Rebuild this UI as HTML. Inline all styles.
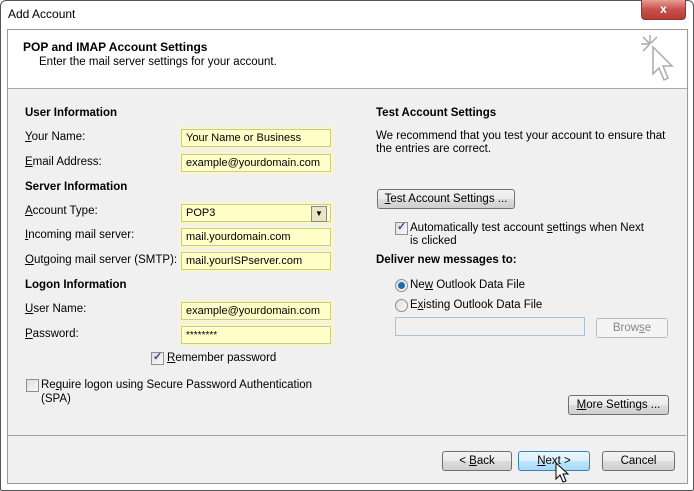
<!DOCTYPE html><html><head><style>
body{margin:0;width:694px;height:491px;overflow:hidden;background:#fff;font-family:"Liberation Sans",sans-serif;font-size:11.5px;color:#000}
.a{position:absolute;white-space:nowrap}
.win{position:absolute;left:0;top:0;width:692px;height:489px;border:1px solid #555;border-radius:6px 6px 2px 2px;background:#fff}
.frame{position:absolute;left:7px;top:29px;width:679px;height:453px;border:1px solid #999;background:#f0f0f0}
.hdr{position:absolute;left:0;top:0;width:679px;height:58px;background:#fff;border-bottom:1px solid #aaa}
.b{font-weight:bold}
.f{position:absolute;width:144px;height:16px;background:#ffffc8;border:1px solid #c8c89a;box-shadow:0 0 0 2px #f8f8c0;padding-left:4px;line-height:17px;font-size:11px;overflow:hidden}
.btn{position:absolute;height:18px;border:1px solid #707070;border-radius:3px;background:linear-gradient(#f2f2f2,#ebebeb 50%,#dddddd 51%,#cfcfcf);text-align:center;line-height:18px}
.cb{position:absolute;width:11px;height:11px;border:1px solid #8f8f8f;background:linear-gradient(135deg,#ddd,#fafafa)}
.rd{position:absolute;width:11px;height:11px;border:1px solid #8f8f8f;border-radius:50%;background:linear-gradient(135deg,#ddd,#fafafa)}
u{text-decoration:underline}
</style></head><body>
<div class="win"></div>
<div class="a" style="left:8px;top:7px;font-size:12px">Add Account</div>
<div class="a" style="left:641px;top:0;width:43px;height:19px;background:linear-gradient(#e8a090,#c75050 50%,#b83c30);border:1px solid #8a3a30;border-top:none;border-radius:0 0 4px 4px;color:#fff;text-align:center;font-weight:bold;font-size:12px;line-height:18px">x</div>
<div class="frame">
<div class="hdr">
<div class="a b" style="left:15px;top:10px;font-size:12px">POP and IMAP Account Settings</div>
<div class="a" style="left:31px;top:26px">Enter the mail server settings for your account.</div>
<svg class="a" style="left:632px;top:4px" width="40" height="52" viewBox="0 0 40 52"><g stroke="#aaa" stroke-width="1.5" fill="none"><path d="M10 1v9M1 10h9M3 3l6 6M17 3l-6 6M3 17l6-6"/><path d="M13 13l0 27 6-6 5 12 4-2-5-12 9 0z" fill="#fff"/></g></svg>
</div>
</div>
<div class="a b" style="left:25px;top:107px">User Information</div>
<div class="a" style="left:25px;top:131px"><u>Y</u>our Name:</div>
<div class="f a" style="left:181px;top:129px">Your Name or Business</div>
<div class="a" style="left:25px;top:156px"><u>E</u>mail Address:</div>
<div class="f a" style="left:181px;top:154px">example@yourdomain.com</div>
<div class="a b" style="left:25px;top:181px">Server Information</div>
<div class="a" style="left:25px;top:205px"><u>A</u>ccount Type:</div>
<div class="f a" style="left:181px;top:204px">POP3</div>
<div class="a" style="left:311px;top:206px;width:14px;height:14px;border:1px solid #888;background:#e6e6c8;font-size:8px;text-align:center;line-height:14px">▼</div>
<div class="a" style="left:25px;top:229px"><u>I</u>ncoming mail server:</div>
<div class="f a" style="left:181px;top:228px">mail.yourdomain.com</div>
<div class="a" style="left:25px;top:254px"><u>O</u>utgoing mail server (SMTP):</div>
<div class="f a" style="left:181px;top:252px">mail.yourISPserver.com</div>
<div class="a b" style="left:25px;top:279px">Logon Information</div>
<div class="a" style="left:25px;top:303px"><u>U</u>ser Name:</div>
<div class="f a" style="left:181px;top:302px">example@yourdomain.com</div>
<div class="a" style="left:25px;top:328px"><u>P</u>assword:</div>
<div class="f a" style="left:181px;top:326px;font-size:10px">********</div>
<div class="cb" style="left:151px;top:352px"></div><div class="a b" style="left:153px;top:350px;color:#3a4a8a;font-size:11px">✓</div>
<div class="a" style="left:167px;top:352px"><u>R</u>emember password</div>
<div class="cb" style="left:26px;top:379px"></div>
<div class="a" style="left:41px;top:379px">Re<u>q</u>uire logon using Secure Password Authentication</div>
<div class="a" style="left:41px;top:393px">(SPA)</div>
<div class="a b" style="left:376px;top:107px">Test Account Settings</div>
<div class="a" style="left:376px;top:130px">We recommend that you test your account to ensure that</div>
<div class="a" style="left:376px;top:143px">the entries are correct.</div>
<div class="btn" style="left:377px;top:189px;width:136px"><u>T</u>est Account Settings ...</div>
<div class="cb" style="left:395px;top:222px"></div><div class="a b" style="left:397px;top:220px;color:#3a4a8a;font-size:11px">✓</div>
<div class="a" style="left:410px;top:222px">Automatically test account <u>s</u>ettings when Next</div>
<div class="a" style="left:410px;top:235px">is clicked</div>
<div class="a b" style="left:376px;top:254px">Deliver new messages to:</div>
<div class="rd" style="left:395px;top:279px"></div><div class="a" style="left:398px;top:282px;width:7px;height:7px;border-radius:50%;background:#1a6fa8"></div>
<div class="a" style="left:410px;top:279px">Ne<u>w</u> Outlook Data File</div>
<div class="rd" style="left:395px;top:299px"></div>
<div class="a" style="left:410px;top:299px">E<u>x</u>isting Outlook Data File</div>
<div class="a" style="left:395px;top:317px;width:188px;height:17px;border:1px solid #abc0d4;background:#f0f0f0"></div>
<div class="a" style="left:596px;top:318px;width:70px;height:18px;border:1px solid #bcbcbc;border-radius:3px;background:#f4f4f4;color:#888;text-align:center;line-height:18px">Brow<u>s</u>e</div>
<div class="btn" style="left:568px;top:395px;width:99px"><u>M</u>ore Settings ...</div>
<div class="a" style="left:8px;top:435px;width:678px;height:1px;background:#a0a0a0"></div>
<div class="btn" style="left:442px;top:451px;width:68px">&lt; <u>B</u>ack</div>
<div class="btn" style="left:518px;top:451px;width:70px;border-color:#3c7fb1;background:linear-gradient(#eaf6fd,#d9f0fc 50%,#bee6fd 51%,#a7d9f5)"><u>N</u>ext &gt;</div>
<div class="btn" style="left:602px;top:451px;width:71px">Cancel</div>
<svg class="a" style="left:555px;top:462px" width="14" height="22" viewBox="0 0 14 22"><path d="M1 1v16l4-4 3 7 3-1-3-7h5z" fill="#fff" stroke="#000"/></svg>
</body></html>
